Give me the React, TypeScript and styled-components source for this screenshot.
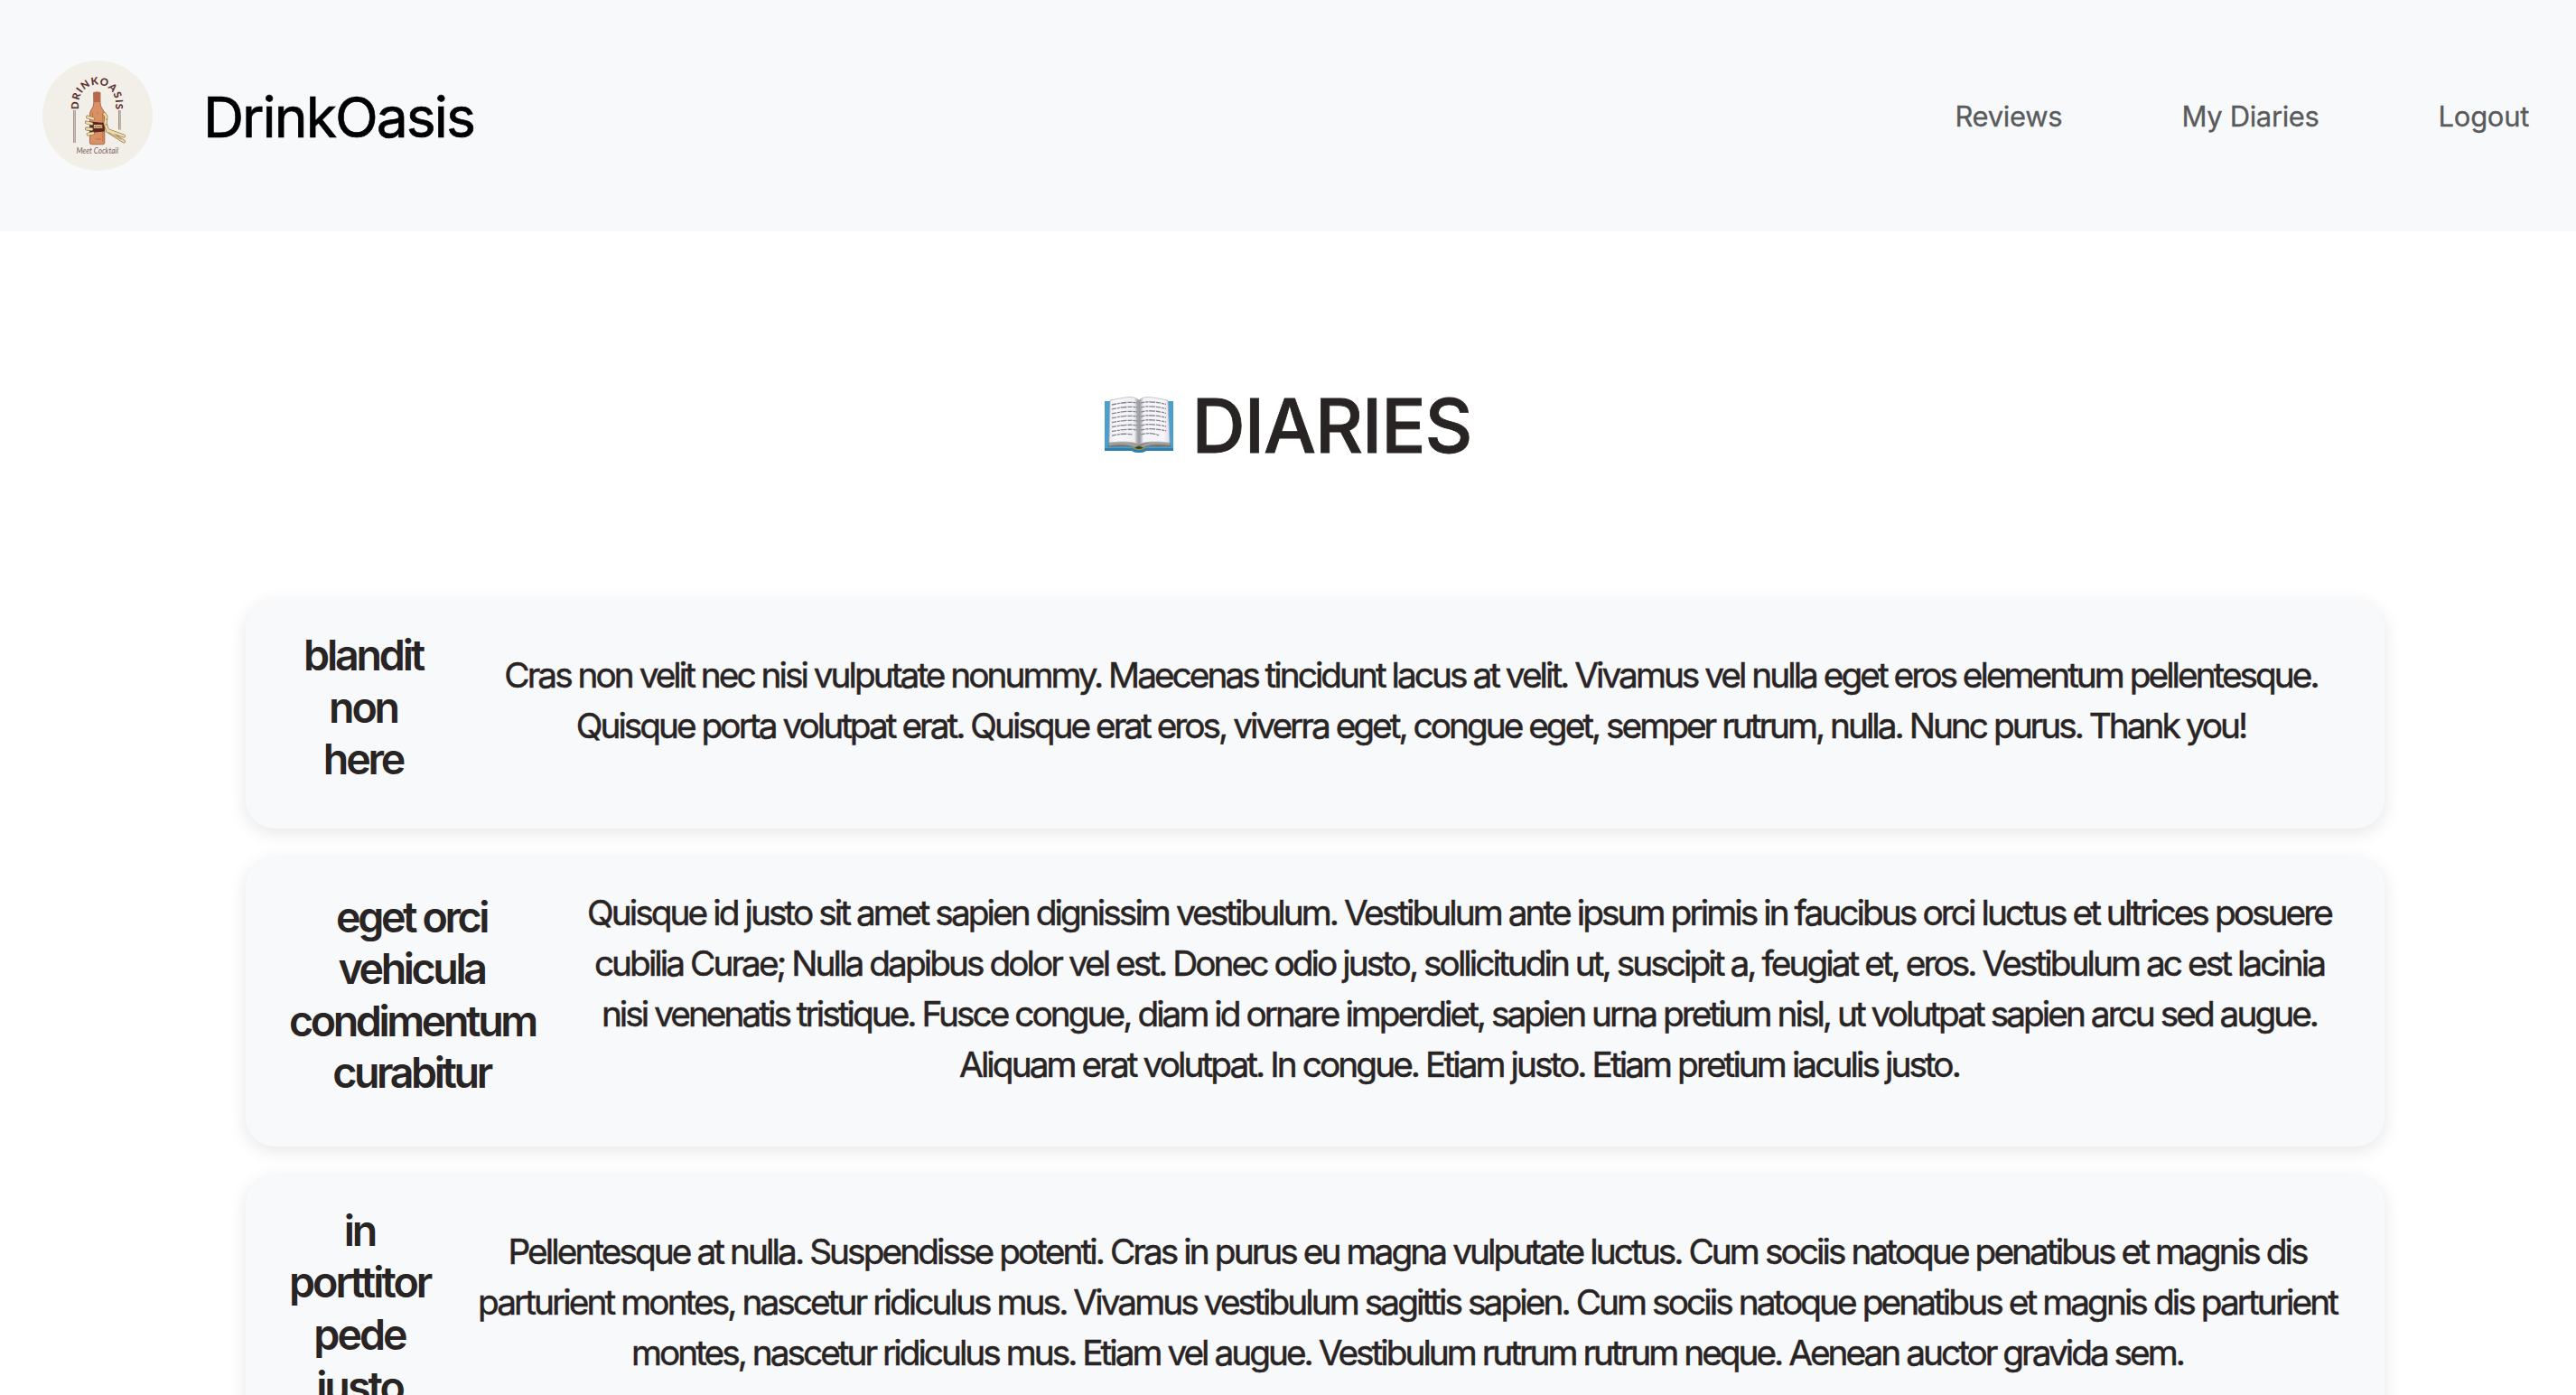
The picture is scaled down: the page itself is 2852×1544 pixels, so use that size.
import React from "react";
import styled, { createGlobalStyle } from "styled-components";

const GlobalStyle = createGlobalStyle`
  *, *::before, *::after { box-sizing: border-box; }
  body {
    margin: 0;
    background: #fff;
    color: #292424;
    font-family: Inter, "Liberation Sans", sans-serif;
  }
`;

const Page = styled.div`
  height: 1544px;
  overflow: hidden;
`;

const Header = styled.header`
  display: flex;
  align-items: center;
  height: 256px;
  padding: 0 52px 0 47px;
  background: #f8f9fb;
`;

const LogoMark = styled.svg`
  display: block;
  width: 122px;
  height: 122px;
`;

const Brand = styled.a`
  margin-left: 56px;
  padding-top: 2px;
  color: #000;
  font-size: 62.5px;
  font-weight: 400;
  -webkit-text-stroke: 0.7px #000;
  letter-spacing: -2px;
  line-height: 96px;
`;

const Nav = styled.nav`
  display: flex;
  gap: 132px;
  margin-left: auto;
  padding-top: 2px;
`;

const NavLink = styled.a<{ $tracking?: number }>`
  color: #595a5b;
  font-size: 31px;
  line-height: 48px;
  -webkit-text-stroke: 0.3px #595a5b;
  letter-spacing: ${({ $tracking = -0.3 }) => $tracking}px;
`;

const Heading = styled.h1`
  display: flex;
  align-items: center;
  justify-content: center;
  gap: 21px;
  margin: 0;
  padding: 167px 0 143px;
  font-size: 82px;
  font-weight: 500;
  -webkit-text-stroke: 0.8px #292424;
  letter-spacing: -1.1px;
  line-height: 98px;
`;

const BookIcon = styled.svg`
  display: block;
  width: 76px;
  height: 62px;
  margin-bottom: 5px;
`;

const DiaryList = styled.main`
  display: flex;
  flex-direction: column;
  gap: 32px;
  margin: 0 212px 0 272px;
`;

const Card = styled.article`
  display: flex;
  align-items: center;
  gap: 48px;
  padding: 32px 48px;
  border-radius: 32px;
  background: #f8f9fb;
  box-shadow: 0 5px 20px rgba(0, 0, 0, 0.1);
  text-align: center;
`;

const CardTitle = styled.h2<{ $width: number; $tracking?: number }>`
  flex: none;
  width: ${({ $width }) => $width}px;
  margin: 1px 0 15px;
  font-size: 46.6px;
  font-weight: 600;
  line-height: 57.6px;
  letter-spacing: ${({ $tracking = -3.4 }) => $tracking}px;
`;

const CardBody = styled.p`
  flex: 1;
  margin: 1px 0 31px;
  font-size: 38.8px;
  font-weight: 400;
  -webkit-text-stroke: 0.5px #292424;
  line-height: 56px;
`;

const Line = styled.span<{ $tracking?: number }>`
  display: block;
  white-space: nowrap;
  letter-spacing: ${({ $tracking = -2.93 }) => $tracking}px;
`;

type Diary = {
  title: string[];
  titleWidth: number;
  titleTracking?: number;
  lines: { text: string; tracking?: number }[];
};

const diaries: Diary[] = [
  {
    title: ["blandit", "non", "here"],
    titleWidth: 164,
    titleTracking: -3.2,
    lines: [
      {
        text: "Cras non velit nec nisi vulputate nonummy. Maecenas tincidunt lacus at velit. Vivamus vel nulla eget eros elementum pellentesque.",
        tracking: -2.98,
      },
      {
        text: "Quisque porta volutpat erat. Quisque erat eros, viverra eget, congue eget, semper rutrum, nulla. Nunc purus. Thank you!",
        tracking: -2.99,
      },
    ],
  },
  {
    title: ["eget orci", "vehicula", "condimentum", "curabitur"],
    titleWidth: 271,
    lines: [
      { text: "Quisque id justo sit amet sapien dignissim vestibulum. Vestibulum ante ipsum primis in faucibus orci luctus et ultrices posuere" },
      {
        text: "cubilia Curae; Nulla dapibus dolor vel est. Donec odio justo, sollicitudin ut, suscipit a, feugiat et, eros. Vestibulum ac est lacinia",
        tracking: -2.95,
      },
      {
        text: "nisi venenatis tristique. Fusce congue, diam id ornare imperdiet, sapien urna pretium nisl, ut volutpat sapien arcu sed augue.",
        tracking: -2.97,
      },
      { text: "Aliquam erat volutpat. In congue. Etiam justo. Etiam pretium iaculis justo." },
    ],
  },
  {
    title: ["in", "porttitor", "pede", "justo"],
    titleWidth: 156,
    titleTracking: -3,
    lines: [
      { text: "Pellentesque at nulla. Suspendisse potenti. Cras in purus eu magna vulputate luctus. Cum sociis natoque penatibus et magnis dis" },
      { text: "parturient montes, nascetur ridiculus mus. Vivamus vestibulum sagittis sapien. Cum sociis natoque penatibus et magnis dis parturient" },
      {
        text: "montes, nascetur ridiculus mus. Etiam vel augue. Vestibulum rutrum rutrum neque. Aenean auctor gravida sem.",
        tracking: -2.99,
      },
    ],
  },
];

function Logo() {
  return (
    <LogoMark viewBox="0 0 122 122">
      <circle cx="61" cy="61" r="61" fill="#f2efe9" />
      <path id="logo-arc" d="M40.3 54V47A20.3 20.3 0 0 1 80.9 47V55" fill="none" />
      <text fill="#5e302d" fontFamily="Lato, sans-serif" fontWeight="900" fontSize="11.4">
        <textPath href="#logo-arc" textLength="77.5">DRINKOASIS</textPath>
      </text>
      <g fill="none" stroke="#7d685c" strokeWidth="0.8">
        <path d="M34.7 55V91M36.2 55V91M84.6 55V76.5M86.1 55V76.5" />
      </g>
      <path
        d="M56.6 35.5Q60.3 34.2 64 35.5V47C64 53 68.8 54 68.8 60V91Q68.8 92.8 66.5 92.8H54.5Q52.4 92.8 52.4 91V60C52.4 54 56.8 53 56.8 47Z"
        fill="#d99163"
        stroke="#8a4a35"
        strokeWidth="0.7"
      />
      <path d="M56.8 35.6Q60.3 34.4 63.8 35.6V46H56.8Z" fill="#b8674b" />
      <path d="M66.8 59V90M55.5 58V62M61 57V59M59 87H65" stroke="#b96843" strokeWidth="0.8" fill="none" />
      <path d="M52.4 67.5L68.8 69V78.5L52.4 80Z" fill="#5a261d" />
      <text x="56.6" y="75.2" fontFamily="Lato, sans-serif" fontWeight="900" fontSize="5" textLength="10" fill="#ecd9a0">
        BEER
      </text>
      <g strokeLinecap="round" strokeLinejoin="round" fill="none">
        <path
          d="M50 62.5L56 64.5M48.8 68.5L54.5 70M48.8 75.5L54.5 76M50.5 81.5L56 80.5M68.5 59L70.5 62L69.5 70L72 77M72 77L90 83.5M72 78L90 89.5"
          stroke="#856544"
          strokeWidth="3.8"
        />
        <path
          d="M50 62.5L56 64.5M48.8 68.5L54.5 70M48.8 75.5L54.5 76M50.5 81.5L56 80.5M68.5 59L70.5 62L69.5 70L72 77M72 77L90 83.5M72 78L90 89.5"
          stroke="#ecdca6"
          strokeWidth="2.6"
        />
        <path d="M70 65L72 65M69 71L72 71M73 79.5L87 87" stroke="#856544" strokeWidth="0.6" />
      </g>
      <text
        x="37.5"
        y="103.4"
        fill="#7a5f5a"
        fontFamily="Lato, sans-serif"
        fontStyle="italic"
        fontWeight="400"
        fontSize="9"
        textLength="46.5"
        lengthAdjust="spacingAndGlyphs"
      >
        Meet Cocktail
      </text>
    </LogoMark>
  );
}

const textRows = [0, 1, 2, 3, 4, 5, 6, 7];

function Book() {
  return (
    <BookIcon viewBox="0 0 76 62">
      <defs>
        <linearGradient id="page-left" x1="0" x2="1">
          <stop offset="0" stopColor="#e6e6ec" />
          <stop offset="0.2" stopColor="#fafafd" />
          <stop offset="0.85" stopColor="#ededf3" />
          <stop offset="1" stopColor="#85858d" />
        </linearGradient>
        <linearGradient id="page-right" x1="1" x2="0">
          <stop offset="0" stopColor="#dcdce4" />
          <stop offset="0.2" stopColor="#f5f5fa" />
          <stop offset="0.85" stopColor="#f3f3f9" />
          <stop offset="1" stopColor="#85858d" />
        </linearGradient>
      </defs>
      <path d="M0 5H76V60H46C43 62.5 33 62.5 30 60H0Z" fill="#4a9fcb" />
      <path d="M0 57H76V60H46C43 62.5 33 62.5 30 60H0Z" fill="#2f80ae" />
      <path d="M6 50L38 49L71 50L74 55.5H44Q38 53 32 55.5H3Z" fill="#77736e" />
      <path d="M6 50Q25 47.5 37 53.5L38 55Q51 47.5 71 50L72.5 54Q52 51.5 43 56H33Q24 51.5 4.5 54.5Z" fill="#a19e9a" />
      <path d="M32 57Q38 52 44 57Q38 60 32 57Z" fill="#23434f" stroke="#a98f2f" strokeWidth="1.2" />
      <path d="M6 4Q14 2.5 22 1Q33 -1 38 4V53Q28 48 5 51Z" fill="url(#page-left)" stroke="#b0b0b8" strokeWidth="0.7" />
      <path d="M70 4Q62 2.5 54 1Q43 -1 38 4V53Q48 48 72 51Z" fill="url(#page-right)" stroke="#b0b0b8" strokeWidth="0.7" />
      <g fill="none" stroke="#85858d" strokeWidth="1.3" strokeDasharray="5 0.9 3 0.7 7 1">
        {textRows.map((row) => (
          <path
            key={row}
            d={`M8 ${9 + row * 4.9}Q${row === 7 ? 20 : 27} ${5 + row * 5} ${row === 7 ? 31 : 36} ${7 + row * 5}M40 ${7 + row * 5}Q50 ${4 + row * 5} ${row === 7 ? 60 : 68} ${8.5 + row * 4.9}`}
          />
        ))}
      </g>
    </BookIcon>
  );
}

export default function App() {
  return (
    <>
      <GlobalStyle />
      <Page>
        <Header>
          <Logo />
          <Brand>DrinkOasis</Brand>
          <Nav>
            <NavLink>Reviews</NavLink>
            <NavLink $tracking={-0.35}>My Diaries</NavLink>
            <NavLink>Logout</NavLink>
          </Nav>
        </Header>
        <Heading>
          <Book />
          <span>DIARIES</span>
        </Heading>
        <DiaryList>
          {diaries.map((diary) => (
            <Card key={diary.title.join(" ")}>
              <CardTitle $width={diary.titleWidth} $tracking={diary.titleTracking}>
                {diary.title.map((part) => (
                  <React.Fragment key={part}>
                    {part}
                    <br />
                  </React.Fragment>
                ))}
              </CardTitle>
              <CardBody>
                {diary.lines.map((line) => (
                  <Line key={line.text} $tracking={line.tracking}>
                    {line.text}
                  </Line>
                ))}
              </CardBody>
            </Card>
          ))}
        </DiaryList>
      </Page>
    </>
  );
}
